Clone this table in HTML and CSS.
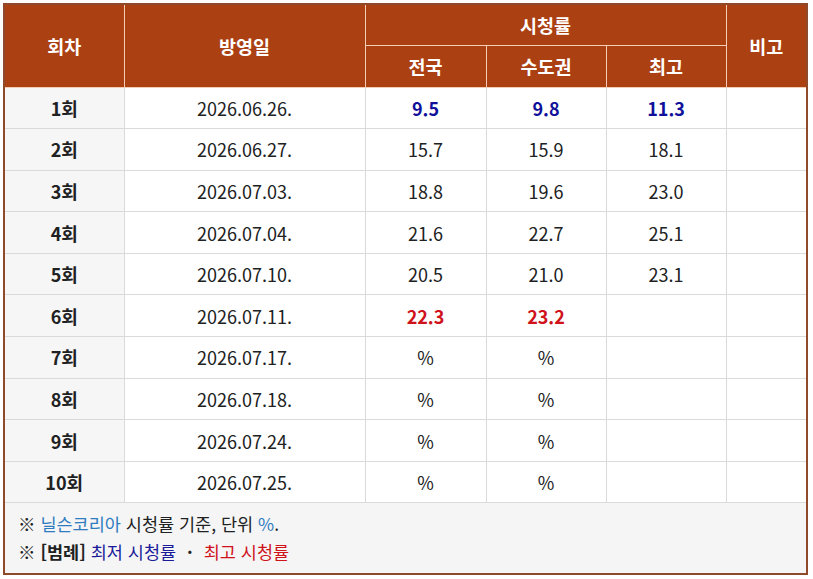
FILE: index.html
```html
<!DOCTYPE html>
<html lang="ko">
<head>
<meta charset="utf-8">
<link rel="stylesheet" href="styles.css">
</head>
<body>
<table class="ratings">
  <colgroup>
    <col class="c-ep"><col class="c-date"><col class="c-nat"><col class="c-cap"><col class="c-max"><col class="c-note">
  </colgroup>
  <thead>
    <tr class="h1">
      <th rowspan="2">회차</th>
      <th rowspan="2">방영일</th>
      <th colspan="3">시청률</th>
      <th rowspan="2">비고</th>
    </tr>
    <tr class="h2">
      <th>전국</th>
      <th>수도권</th>
      <th>최고</th>
    </tr>
  </thead>
  <tbody>
    <tr><th>1회</th><td>2026.06.26.</td><td class="low">9.5</td><td class="low">9.8</td><td class="low">11.3</td><td></td></tr>
    <tr><th>2회</th><td>2026.06.27.</td><td>15.7</td><td>15.9</td><td>18.1</td><td></td></tr>
    <tr><th>3회</th><td>2026.07.03.</td><td>18.8</td><td>19.6</td><td>23.0</td><td></td></tr>
    <tr><th>4회</th><td>2026.07.04.</td><td>21.6</td><td>22.7</td><td>25.1</td><td></td></tr>
    <tr><th>5회</th><td>2026.07.10.</td><td>20.5</td><td>21.0</td><td>23.1</td><td></td></tr>
    <tr><th>6회</th><td>2026.07.11.</td><td class="high">22.3</td><td class="high">23.2</td><td></td><td></td></tr>
    <tr><th>7회</th><td>2026.07.17.</td><td>%</td><td>%</td><td></td><td></td></tr>
    <tr><th>8회</th><td>2026.07.18.</td><td>%</td><td>%</td><td></td><td></td></tr>
    <tr><th>9회</th><td>2026.07.24.</td><td>%</td><td>%</td><td></td><td></td></tr>
    <tr><th>10회</th><td>2026.07.25.</td><td>%</td><td>%</td><td></td><td></td></tr>
  </tbody>
  <tfoot>
    <tr>
      <td colspan="6" class="foot">
        <div class="note">※ <span class="link">닐슨코리아</span> 시청률 기준, 단위 <span class="link">%</span>.</div>
        <div class="note">※ <b>[범례]</b> <span class="lowtxt">최저 시청률</span> <span class="dot">·</span> <span class="hightxt">최고 시청률</span></div>
      </td>
    </tr>
  </tfoot>
</table>
</body>
</html>
```
FILE: styles.css
```css
html, body {
  margin: 0;
  padding: 0;
  background: #ffffff;
}
body {
  padding: 3px 0 0 3px;
  font-family: "Noto Sans CJK KR", "Noto Sans", sans-serif;
  color: #202122;
}
.ratings {
  width: 803px;
  border-collapse: collapse;
  border: 2px solid #8f4a2c;
  font-size: 18px;
  text-align: center;
  table-layout: fixed;
}
.c-ep { width: 120px; }
.c-date { width: 241px; }
.c-nat { width: 121px; }
.c-cap { width: 120px; }
.c-max { width: 120px; }
.c-note { width: 81px; }
thead th {
  background: #ab4013;
  color: #ffffff;
  font-weight: 700;
  font-size: 18.5px;
  border: 1px solid #f3cdb4;
  padding: 0;
}
thead tr.h1 th { height: 40px; }
thead tr.h2 th { height: 40.5px; }
thead tr.h1 th { border-top-color: #ab4013; }
thead tr th:first-child { border-left-color: #ab4013; }
tbody th, tbody td {
  height: 40.6px;
  padding: 0;
  border: 1px solid #dadada;
}
tbody th {
  background: #f6f6f6;
  font-weight: 700;
}
tbody td {
  background: #ffffff;
  font-weight: 400;
}
.low {
  color: #10109a;
  font-weight: 700;
}
.high {
  color: #d0121b;
  font-weight: 700;
}
.foot {
  background: #f5f5f5;
  text-align: left;
  padding: 7px 14px 7px 13px;
  border-top: 1px solid #dadada;
  font-size: 17.5px;
}
.note {
  line-height: 28px;
}
.link { color: #2f7bbf; }
.lowtxt { color: #1b1b9a; }
.hightxt { color: #d0121b; }
.dot { padding: 0 6px; font-weight: 700; }
```
